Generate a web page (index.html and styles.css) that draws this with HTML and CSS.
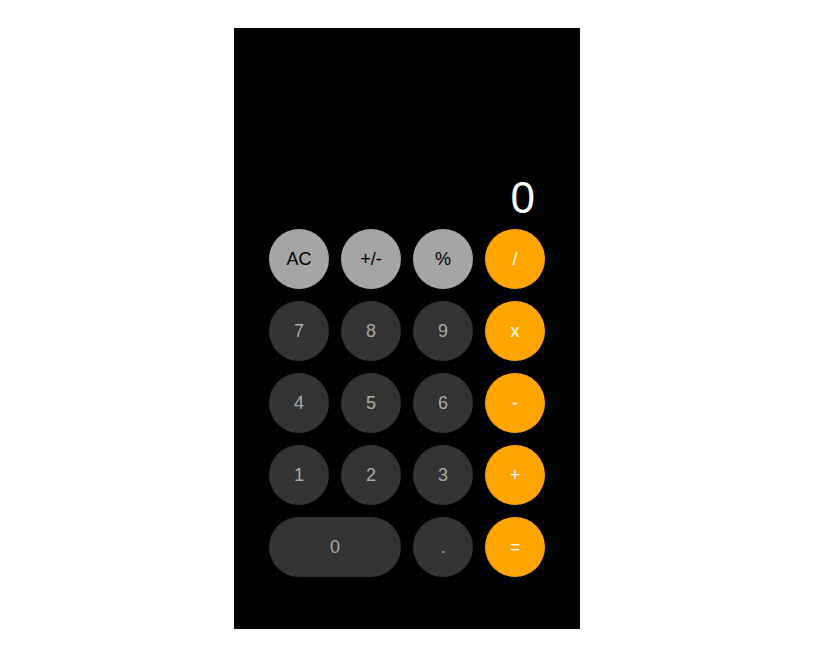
FILE: index.html
```html
<!DOCTYPE html>
<html>
<head>
<meta charset="utf-8">
<link rel="stylesheet" href="styles.css">
</head>
<body>
<div class="calc">
  <div class="display">0</div>
  <div class="keys">
    <button class="key fn">AC</button>
    <button class="key fn">+/-</button>
    <button class="key fn">%</button>
    <button class="key op">/</button>
    <button class="key num">7</button>
    <button class="key num">8</button>
    <button class="key num">9</button>
    <button class="key op">x</button>
    <button class="key num">4</button>
    <button class="key num">5</button>
    <button class="key num">6</button>
    <button class="key op">-</button>
    <button class="key num">1</button>
    <button class="key num">2</button>
    <button class="key num">3</button>
    <button class="key op">+</button>
    <button class="key num zero">0</button>
    <button class="key num">.</button>
    <button class="key op">=</button>
  </div>
</div>
</body>
</html>
```
FILE: styles.css
```css
html, body {
  margin: 0;
  padding: 0;
  background: #fff;
}
body {
  font-family: "Liberation Sans", Arial, sans-serif;
}
.calc {
  box-sizing: border-box;
  width: 346px;
  height: 601px;
  margin: 28px 0 0 234px;
  background: #000;
  padding: 0 35px 52px;
  display: flex;
  flex-direction: column;
  justify-content: flex-end;
}
.display {
  color: #fff;
  font-size: 44px;
  line-height: 50px;
  text-align: right;
  padding-right: 10px;
  margin-bottom: 6px;
}
.keys {
  display: grid;
  grid-template-columns: repeat(4, 60px);
  grid-auto-rows: 60px;
  gap: 12px;
}
.key {
  border: none;
  border-radius: 30px;
  font-family: "Liberation Sans", Arial, sans-serif;
  font-size: 18px;
  padding: 0;
  margin: 0;
  cursor: pointer;
}
.fn {
  background: #a5a5a5;
  color: #000;
}
.num {
  background: #333;
  color: #aaa;
}
.op {
  background: #ffa500;
  color: #fff;
}
.zero {
  grid-column: span 2;
}
```
